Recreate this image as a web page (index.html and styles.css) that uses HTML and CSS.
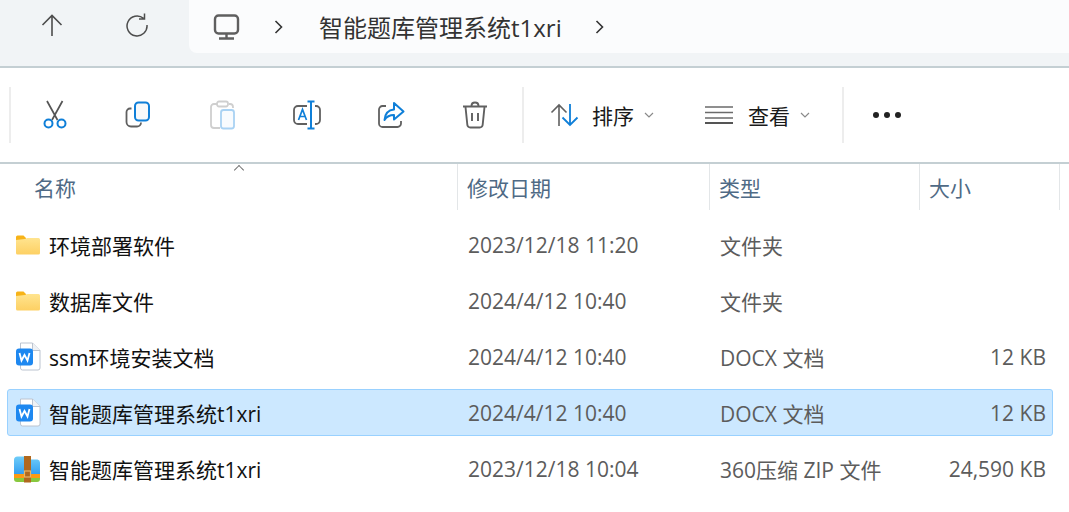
FILE: index.html
```html
<!DOCTYPE html>
<html lang="zh-CN">
<head>
  <meta charset="UTF-8">
  <title>智能题库管理系统t1xri</title>
  <link rel="stylesheet" href="styles.css">
</head>
<body>
  <!-- 地址栏 -->
  <div class="navbar">
    <div class="nav-buttons">
      <svg class="nav-icon" width="24" height="24" viewBox="0 0 24 24"><path d="M12 23V2.5M2.500 12L12 2.500 21.500 12" fill="none" stroke="#4d4d4d" stroke-width="1.600"/></svg>
      <svg class="nav-icon" width="24" height="24" viewBox="0 0 24 24"><path d="M18.500 5.300A10 10 0 1 0 22 12M19.500 0.500V6H14" fill="none" stroke="#4d4d4d" stroke-width="1.500"/></svg>
    </div>
    <div class="address">
      <svg width="28" height="26" viewBox="0 0 28 26"><rect x="2" y="1.500" width="23" height="18" rx="3.500" fill="none" stroke="#5f5f5f" stroke-width="2.400"/><path d="M13.500 20v4M6 24.500h15" fill="none" stroke="#5f5f5f" stroke-width="2.400"/></svg>
      <svg class="crumb-arrow" width="12" height="16" viewBox="0 0 12 16"><path d="M2.500 2l6 6-6 6" fill="none" stroke="#333" stroke-width="1.600"/></svg>
      <span class="crumb">智能题库管理系统t1xri</span>
      <svg class="crumb-arrow last" width="12" height="16" viewBox="0 0 12 16"><path d="M2.500 2l6 6-6 6" fill="none" stroke="#333" stroke-width="1.600"/></svg>
    </div>
  </div>

  <!-- 工具栏 -->
  <div class="toolbar">
    <div class="group group-edit">
      <svg width="28" height="30" viewBox="0 0 28 30"><path d="M6 1l10.500 19M21.500 1L11 20" fill="none" stroke="#555" stroke-width="1.700"/><circle cx="7.500" cy="23.500" r="4" fill="none" stroke="#0f7fd8" stroke-width="2"/><circle cx="20.500" cy="23.500" r="4" fill="none" stroke="#0f7fd8" stroke-width="2"/></svg>
      <svg width="28" height="28" viewBox="0 0 28 28"><path d="M6.500 7.500H5a3.500 3.500 0 0 0-3.500 3.500v10A4.500 4.500 0 0 0 6 25.500h6a4 4 0 0 0 4-4" fill="none" stroke="#606060" stroke-width="1.800"/><rect x="10" y="1.500" width="14" height="18" rx="3.500" fill="#f7f9fb" stroke="#0f7fd8" stroke-width="2"/></svg>
      <svg width="28" height="30" viewBox="0 0 28 30"><path d="M8 4H5a3 3 0 0 0-3 3v18a3 3 0 0 0 3 3h6M20 4h1a3 3 0 0 1 3 3v1" fill="none" stroke="#cfcfcf" stroke-width="1.800"/><rect x="8" y="1.500" width="11" height="5" rx="2" fill="none" stroke="#cfcfcf" stroke-width="1.800"/><rect x="12" y="10" width="13" height="18.500" rx="2.500" fill="#f8fbfe" stroke="#a9d2f3" stroke-width="1.800"/></svg>
      <svg width="30" height="30" viewBox="0 0 30 30"><path d="M15 6H6a4 4 0 0 0-4 4v10a4 4 0 0 0 4 4h9M23 6h1a4 4 0 0 1 4 4v10a4 4 0 0 1-4 4h-1" fill="none" stroke="#606060" stroke-width="1.800"/><path d="M15.500 1.500h7M19 1.500v27M15.500 28.500h7" fill="none" stroke="#0f7fd8" stroke-width="2"/><path d="M6.500 20L10.500 9.500 14.500 20M8 16.500h5" fill="none" stroke="#0f7fd8" stroke-width="1.700"/></svg>
      <svg width="28" height="28" viewBox="0 0 28 28"><path d="M9 5H5.500A3.500 3.500 0 0 0 2 8.500v14A3.500 3.500 0 0 0 5.500 26h15a3.500 3.500 0 0 0 3.500-3.500V20" fill="none" stroke="#606060" stroke-width="1.800"/><path d="M17 2l9.500 8.500L17 18.500v-4.500c-4 0-7 1-9.500 5 .5-6 4-10 9.500-10.500z" fill="none" stroke="#0f7fd8" stroke-width="2" stroke-linejoin="round"/></svg>
      <svg width="26" height="28" viewBox="0 0 26 28"><path d="M1 5.500h24M9.500 5c0-2.200 1.500-3.500 3.500-3.500s3.500 1.300 3.500 3.500M3.500 6l1.800 17.500A3 3 0 0 0 8.300 26.500h9.400a3 3 0 0 0 3-3L22.500 6M10 12v8M16 12v8" fill="none" stroke="#606060" stroke-width="1.900"/></svg>
    </div>
    <div class="group group-view">
      <div class="tool tool-sort">
        <svg width="30" height="24" viewBox="0 0 30 24"><path d="M9 23V2M1.500 9.500L9 2l7.500 7.500" fill="none" stroke="#606060" stroke-width="1.600"/><path d="M20 1v21M12.500 14.500L20 22l7.500-7.500" fill="none" stroke="#0f7fd8" stroke-width="1.800"/></svg>
        <span>排序</span>
        <svg class="caret" width="10" height="6" viewBox="0 0 10 6"><path d="M1 1l4 4 4-4" fill="none" stroke="#8a8a8a" stroke-width="1.200"/></svg>
      </div>
      <div class="tool tool-view">
        <svg width="28" height="20" viewBox="0 0 28 20"><path d="M0 2h28M0 7.500h28M0 13h28" fill="none" stroke="#6b6b6b" stroke-width="1.500"/><path d="M0 18h28" fill="none" stroke="#555" stroke-width="2"/></svg>
        <span>查看</span>
        <svg class="caret" width="10" height="6" viewBox="0 0 10 6"><path d="M1 1l4 4 4-4" fill="none" stroke="#8a8a8a" stroke-width="1.200"/></svg>
      </div>
    </div>
    <div class="more"><i></i><i></i><i></i></div>
  </div>

  <!-- 文件列表 -->
  <div class="header row-grid">
    <div class="col col-name">名称<span class="sort-mark"></span></div>
    <div class="col">修改日期</div>
    <div class="col">类型</div>
    <div class="col">大小</div>
  </div>

  <div class="list">
    <div class="file row-grid">
      <div class="name"><svg class="icon" width="26" height="22" viewBox="0 0 26 22"><use href="#folder"/></svg>环境部署软件</div>
      <div class="date">2023/12/18 11:20</div><div class="type">文件夹</div><div class="size"></div>
    </div>
    <div class="file row-grid">
      <div class="name"><svg class="icon" width="26" height="22" viewBox="0 0 26 22"><use href="#folder"/></svg>数据库文件</div>
      <div class="date">2024/4/12 10:40</div><div class="type">文件夹</div><div class="size"></div>
    </div>
    <div class="file row-grid">
      <div class="name"><svg class="icon" width="26" height="30" viewBox="0 0 26 30"><use href="#wps"/></svg>ssm环境安装文档</div>
      <div class="date">2024/4/12 10:40</div><div class="type">DOCX 文档</div><div class="size">12 KB</div>
    </div>
    <div class="file row-grid selected">
      <div class="name"><svg class="icon" width="26" height="30" viewBox="0 0 26 30"><use href="#wps"/></svg>智能题库管理系统t1xri</div>
      <div class="date">2024/4/12 10:40</div><div class="type">DOCX 文档</div><div class="size">12 KB</div>
    </div>
    <div class="file row-grid">
      <div class="name"><svg class="icon icon-zip" width="28" height="28" viewBox="0 0 28 28"><use href="#zip"/></svg>智能题库管理系统t1xri</div>
      <div class="date">2023/12/18 10:04</div><div class="type">360压缩 ZIP 文件</div><div class="size">24,590 KB</div>
    </div>
  </div>

  <!-- 图标定义 -->
  <svg class="defs" width="0" height="0">
    <defs>
      <linearGradient id="folderFill" x1="0" y1="0" x2="0" y2="1"><stop offset="0" stop-color="#ffe48f"/><stop offset="1" stop-color="#fdd063"/></linearGradient>
      <linearGradient id="zipFill" x1="0" y1="0" x2="0" y2="1"><stop offset="0" stop-color="#6fcdf9"/><stop offset="1" stop-color="#2f9cf0"/></linearGradient>
      <symbol id="folder" viewBox="0 0 26 22">
        <path d="M1 3a1.500 1.500 0 0 1 1.500-1.500h6L11 4v4H1z" fill="#f7b318"/>
        <path d="M1 6l9-1 2-1h11.500A1.500 1.500 0 0 1 25 5.500V19a1.500 1.500 0 0 1-1.500 1.500h-21A1.500 1.500 0 0 1 1 19z" fill="url(#folderFill)"/>
      </symbol>
      <symbol id="wps" viewBox="0 0 26 30">
        <path d="M5.500 1h12l7.500 7.500V26a2 2 0 0 1-2 2H7.500a2 2 0 0 1-2-2z" fill="#fff" stroke="#bcc4d0" stroke-width="1"/>
        <path d="M17.500 1v7.500H25" fill="#eef1f5" stroke="#bcc4d0" stroke-width="1"/>
        <rect x="1" y="6.500" width="17" height="17" rx="3" fill="#1e88f0"/>
        <path d="M4.500 11l2 7.500 3-5.500 3 5.500 2-7.500" fill="none" stroke="#fff" stroke-width="1.800"/>
      </symbol>
      <symbol id="zip" viewBox="0 0 28 28">
        <path d="M1 5a3.500 3.500 0 0 1 3.500-3.500H12l3 3h9.500A3 3 0 0 1 27 7.500V20H1z" fill="url(#zipFill)"/>
        <rect x="1" y="19" width="26" height="4" fill="#fb9a12"/>
        <path d="M1 23h26v1a3 3 0 0 1-3 3H4a3 3 0 0 1-3-3z" fill="#88c83e"/>
        <rect x="11" y="1" width="7" height="26.500" fill="#b0681e"/>
        <rect x="11.500" y="16" width="6" height="6" fill="none" stroke="#e8b566" stroke-width="1.200"/>
      </symbol>
    </defs>
  </svg>
</body>
</html>
```

FILE: styles.css
```css
html, body {
  margin: 0;
  height: 512px;
  overflow: hidden;
  background: #fff;
  font-family: "Open Sans", "Noto Sans CJK SC", sans-serif;
  color: #1a1a1a;
}
svg {
  display: block;
  flex: none;
}
.defs {
  position: absolute;
}

/* 地址栏 */
.navbar {
  display: flex;
  height: 66px;
  background: #f1f4f6;
  border-bottom: 2px solid #c4cfd3;
}
.nav-buttons {
  display: flex;
  width: 189px;
  height: 53px;
  padding: 13px 0 0 40px;
  gap: 61px;
  box-sizing: border-box;
}
.address {
  flex: 1;
  display: flex;
  align-items: center;
  height: 53px;
  padding-left: 24px;
  background: #fbfcfd;
  border-bottom-left-radius: 8px;
  box-sizing: border-box;
}
.crumb-arrow {
  margin-left: 32px;
}
.crumb {
  margin-left: 34px;
  font-size: 24px;
  color: #333;
}
.crumb-arrow.last {
  margin-left: 32px;
}

/* 工具栏 */
.toolbar {
  display: flex;
  align-items: center;
  height: 94px;
  border-bottom: 2px solid #c4cfd3;
}
.group {
  display: flex;
  align-items: center;
  height: 56px;
  border-left: 2px solid #ededed;
}
.group-edit {
  display: grid;
  grid-template-columns: repeat(6, 84px);
  justify-items: center;
  margin-left: 9px;
  width: 513px;
  padding-left: 2px;
  box-sizing: border-box;
}
.group-view {
  width: 322px;
  box-sizing: border-box;
  border-right: 2px solid #ededed;
}
.tool {
  display: flex;
  align-items: center;
  font-size: 21px;
  color: #1a1a1a;
}
.tool-sort {
  margin-left: 26px;
}
.tool-sort span {
  margin-left: 12px;
}
.tool-view {
  margin-left: 51px;
}
.tool-view span {
  margin-left: 15px;
}
.caret {
  margin-left: 10px;
}
.more {
  display: flex;
  gap: 5px;
  margin-left: 29px;
}
.more i {
  width: 6px;
  height: 6px;
  border-radius: 50%;
  background: #222;
}

/* 文件列表 */
.row-grid {
  display: grid;
  grid-template-columns: 457px 252px 210px 140px;
}
.header {
  height: 46px;
  font-size: 21px;
  color: #4f6a85;
}
.col {
  position: relative;
  display: flex;
  align-items: center;
  padding-left: 10px;
  border-right: 1px solid #e3e6e8;
  box-sizing: border-box;
  width: calc(100% + 1px);
}
.col-name {
  padding-left: 34px;
  width: 458px;
}
.sort-mark {
  position: absolute;
  left: 235px;
  top: 2px;
  width: 7px;
  height: 7px;
  border-left: 1px solid #666;
  border-top: 1px solid #666;
  transform: rotate(45deg) scale(0.9);
}
.list {
  padding-top: 11px;
}
.file {
  height: 47px;
  margin: 0 16px 9px 7px;
  grid-template-columns: 450px 252px 210px 126px;
  align-items: center;
  font-size: 21px;
  color: #5c5c5c;
  border: 1px solid transparent;
  border-radius: 3px;
  box-sizing: border-box;
}
.file.selected {
  background: #cce8ff;
  border-color: #99d1ff;
}
.name {
  display: flex;
  align-items: center;
  font-size: 21px;
  color: #111;
  position: relative;
  padding-left: 41px;
}
.icon {
  position: absolute;
  left: 7px;
}
.icon-zip {
  left: 5px;
}
.date, .type {
  padding-left: 10px;
}
.type {
  white-space: nowrap;
}
.size {
  text-align: right;
}
```
